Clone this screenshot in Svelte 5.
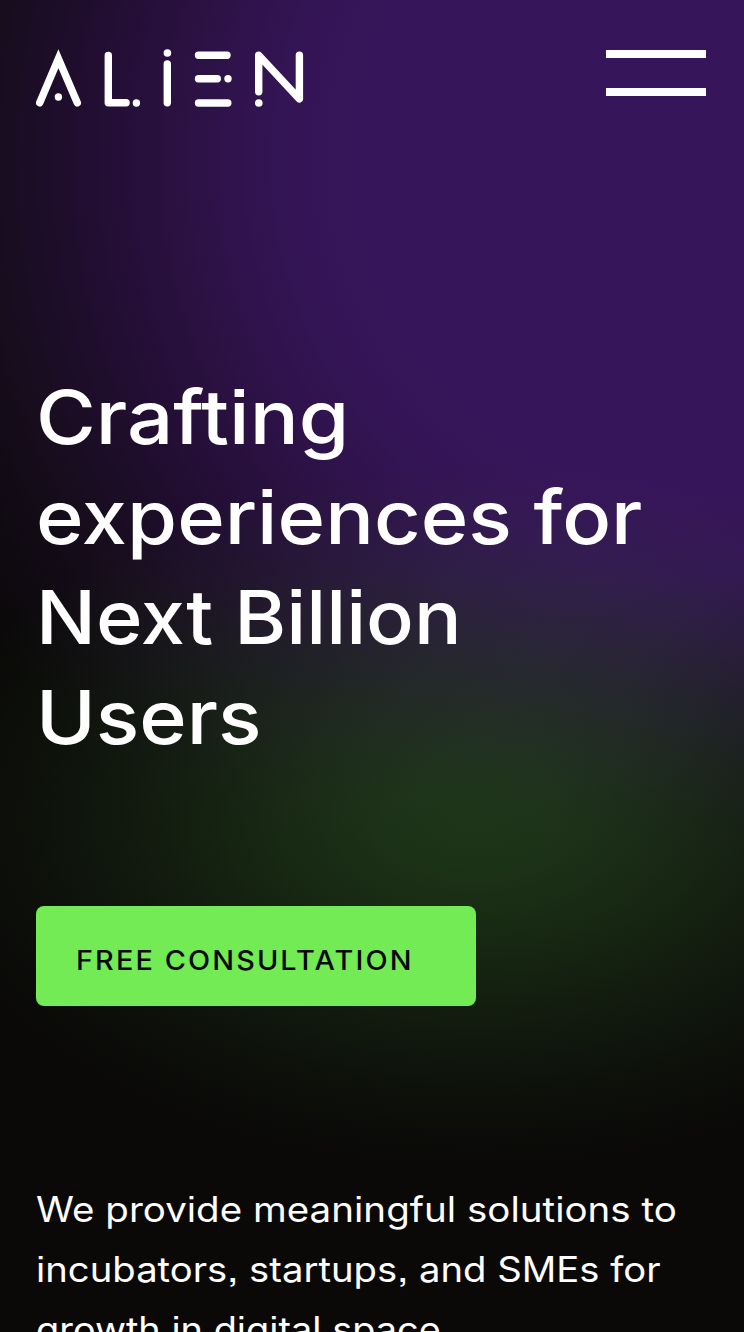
<script>
  const headline = [
    { text: 'Crafting', stretch: 1.095 },
    { text: 'experiences for', stretch: 1.088 },
    { text: 'Next Billion', stretch: 1.063 },
    { text: 'Users', stretch: 1.085 }
  ];
  const intro = [
    { text: 'We provide meaningful solutions to', stretch: 1.101 },
    { text: 'incubators, startups, and SMEs for', stretch: 1.093 },
    { text: 'growth in digital space.', stretch: 1.083 }
  ];
</script>

<main class="page">
  <header class="topbar">
    <svg class="logo" width="268" height="60" viewBox="36 48 268 60" role="img" aria-label="Alien">
      <g fill="none" stroke="#fff" stroke-width="7.4" stroke-linecap="round" stroke-miterlimit="10">
        <path d="M39.7 102.8 58.4 58.7 77.3 102.8" />
        <path d="M108.3 55.5V102.8H126.1" stroke-linejoin="round" />
        <path d="M167.3 64V102.8" />
        <path d="M198.5 55.3H227M198.5 78.8H217.3M198.5 103H227.8" />
        <path d="M258.7 91.8V55.2L299.4 98.9V55.2" stroke-linejoin="round" />
      </g>
      <g fill="#fff">
        <circle cx="58.4" cy="97" r="3.7" />
        <circle cx="136.4" cy="103" r="3.7" />
        <circle cx="167.4" cy="53" r="3.8" />
        <circle cx="228" cy="78.8" r="3.7" />
        <circle cx="258.8" cy="103" r="3.8" />
      </g>
    </svg>
    <button class="menu" aria-label="Menu"><span></span><span></span></button>
  </header>

  <h1>
    {#each headline as line}
      <span style="transform: scaleX({line.stretch})">{line.text}</span>
    {/each}
  </h1>

  <a class="cta" href="#consultation"><span>FREE CONSULTATION</span></a>

  <p>
    {#each intro as line}
      <span style="transform: scaleX({line.stretch})">{line.text}</span>
    {/each}
  </p>
</main>

<style>
  :global(body) { margin: 0; background: #0a0908; overflow: hidden; }
  .page {
    box-sizing: border-box;
    height: 1332px;
    overflow: hidden;
    padding: 48px 38px 0 36px;
    display: flex;
    flex-direction: column;
    align-items: flex-start;
    color: #fff;
    font-family: Inter, sans-serif;
    font-feature-settings: 'ss07' 1;
    background:
      radial-gradient(ellipse 560px 350px at 475px 815px, rgba(50, 104, 40, 0.46) 0%, rgba(50, 104, 40, 0.43) 15%, rgba(50, 104, 40, 0.33) 35%, rgba(50, 104, 40, 0.2) 57%, rgba(50, 104, 40, 0.09) 78%, rgba(50, 104, 40, 0.03) 92%, rgba(50, 104, 40, 0) 100%),
      linear-gradient(to bottom, rgba(10, 9, 8, 0) 580px, rgba(10, 9, 8, 0.1) 640px, rgba(10, 9, 8, 0.35) 720px, rgba(10, 9, 8, 0.75) 820px, rgba(10, 9, 8, 1) 960px),
      radial-gradient(circle 850px at 690px 160px, #37155a 0%, #37155a 39%, #331454 49%, #2a1141 61%, #200d2e 73%, #170d1d 83%, #0f0a11 92%, #0a0908 100%);
  }
  .page > * { flex-shrink: 0; }
  .topbar { width: 100%; height: 60px; display: flex; justify-content: space-between; align-items: flex-start; }
  .logo { display: block; }
  .menu { margin: 2px 0 0; padding: 0; border: 0; background: none; width: 100px; height: 46px; display: flex; flex-direction: column; justify-content: space-between; }
  .menu span { width: 100%; height: 8px; background: #fff; }
  h1 { margin: 259px 0 0; font-size: 74.5px; font-weight: 500; line-height: 100px; }
  h1 span, p span { display: block; white-space: nowrap; width: max-content; transform-origin: 0 50%; }
  .cta {
    box-sizing: border-box;
    margin-top: 139px;
    width: 440px;
    height: 100px;
    padding: 8px 0 0 40px;
    display: flex;
    align-items: center;
    border-radius: 8px;
    background: #72eb54;
    color: #0a0907;
    font-size: 27px;
    font-weight: 500;
    letter-spacing: 2px;
    text-decoration: none;
    white-space: nowrap;
  }
  .cta span { transform: scaleX(1.067); transform-origin: 0 50%; }
  p { margin: 173px 0 0; font-size: 35px; font-weight: 400; line-height: 60px; }
</style>
